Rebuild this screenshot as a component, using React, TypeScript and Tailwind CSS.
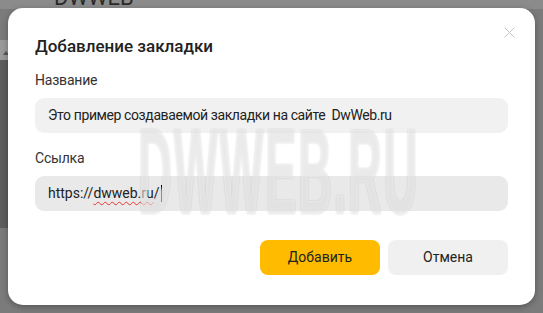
import React from "react";

const font = { fontFamily: 'Roboto, "Noto Sans", Arial, sans-serif' };

const Field = (props: { label: string; children: React.ReactNode; tone: string }) => {
  const { label, children, tone } = props;
  return (
    <div className="flex flex-col">
      <div className="h-[20px] text-[14px] leading-[20px] tracking-[-0.2px] text-[#333]">{label}</div>
      <div
        className={`mt-[8px] flex h-[35px] items-center rounded-[9px] px-[13px] text-[14px] text-[#222] ${tone}`}
      >
        {children}
      </div>
    </div>
  );
};

export default function App() {
  return (
    <div
      className="relative h-[313px] w-[543px] overflow-hidden bg-[#7b7b7b] p-[8px] pr-[8px]"
      style={font}
    >
      {/* page behind the overlay */}
      <div className="absolute left-0 top-0 h-[9px] w-full bg-[#8b8b8b]" />
      <div className="absolute left-[54px] top-[-13px] text-[22px] leading-[22px] text-[#2a2a2a]">DWWEB</div>
      <div className="absolute left-0 top-[40px] h-[20px] w-[8px] bg-[#9a9a9a]" />
      <div className="absolute left-[3px] top-[51px] h-0 w-0 border-x-[3px] border-b-[4px] border-x-transparent border-b-[#555]" />
      <div className="absolute left-0 top-[60px] h-[168px] w-[8px] bg-[#5e5e5e]" />

      <div className="relative flex h-[297px] w-[527px] flex-col rounded-[15px] bg-white px-[27px] pt-[27px] shadow-[0_2px_6px_rgba(0,0,0,0.3)]">
        <button className="absolute right-[20px] top-[19px] h-[11px] w-[11px]">
          <svg viewBox="0 0 11 11" className="h-[11px] w-[11px]" fill="none" stroke="#c4c4c4" strokeWidth="1">
            <path d="M0.5 0.5 L10.5 10.5 M10.5 0.5 L0.5 10.5" />
          </svg>
        </button>
        <h1 className="h-[22px] text-[17px] font-medium leading-[22px] text-[#222]">Добавление закладки</h1>

        <div className="mt-[13px] w-[473px]">
          <Field label="Название" tone="bg-[#f1f1f1]">
            <span className="tracking-[-0.4px]">Это пример создаваемой закладки на сайте&nbsp; DwWeb.ru</span>
          </Field>
        </div>
        <div className="mt-[15px] w-[473px]">
          <Field label="Ссылка" tone="bg-[#e9e9e9]">
            <span>https://</span>
            <span className="underline decoration-wavy decoration-[#e33] decoration-[1px] underline-offset-[3px]">dwweb.ru</span>
            <span>/</span>
            <span className="ml-[1px] h-[17px] w-[1px] bg-black" />
          </Field>
        </div>

        <div className="mt-[29px] flex w-[473px] justify-end gap-[8px]">
          <button className="h-[35px] w-[120px] rounded-[8px] bg-[#ffbb00] text-[14px] text-[#222]">Добавить</button>
          <button className="h-[35px] w-[120px] rounded-[8px] bg-[#f0f0f0] text-[14px] text-[#222]">Отмена</button>
        </div>

        {/* watermark */}
        <div
          className="pointer-events-none absolute left-[130px] top-[103px] origin-left scale-x-[0.385] text-[122px] font-bold leading-[122px] tracking-[4px] text-white/55 [text-shadow:0_0_3px_rgba(0,0,0,0.18)]"
          style={{ fontFamily: '"Liberation Sans", Arial, sans-serif' }}
        >
          DWWEB.RU
        </div>
      </div>
    </div>
  );
}
